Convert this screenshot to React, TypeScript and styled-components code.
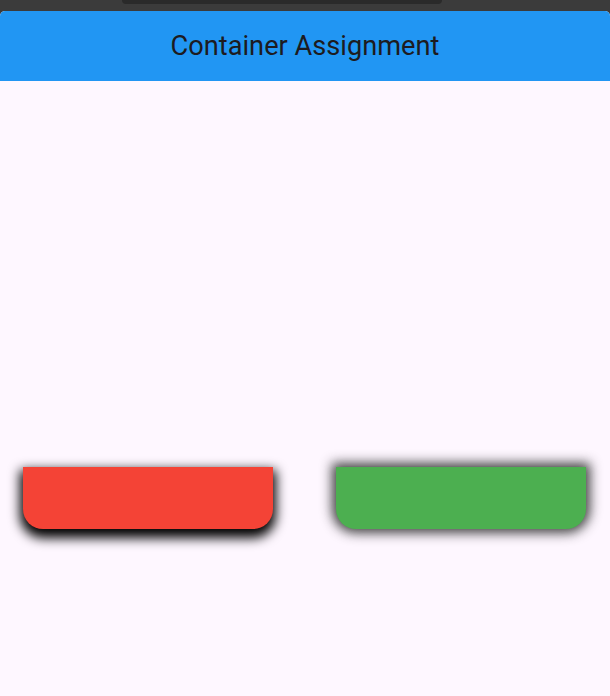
import styled, { createGlobalStyle } from 'styled-components';

const GlobalStyle = createGlobalStyle`
  html, body {
    margin: 0;
    padding: 0;
    background: #3b3b3b;
  }
  body {
    font-family: Roboto, "Noto Sans", sans-serif;
  }
`;

const Screen = styled.div`
  width: 610px;
  height: 696px;
  display: flex;
  flex-direction: column;
  background: #3b3b3b;
  overflow: hidden;
`;

const StatusBar = styled.div`
  height: 11px;
  flex-shrink: 0;
  padding-left: 122px;
`;

const Notch = styled.div`
  width: 320px;
  height: 4px;
  background: #2a2a2a;
  border-radius: 0 0 12px 12px;
`;

const Window = styled.div`
  flex: 1;
  display: flex;
  flex-direction: column;
  background: #fef7ff;
  border-radius: 5px 5px 0 0;
  overflow: hidden;
`;

const AppBar = styled.header`
  height: 70px;
  background: #2196f3;
  display: flex;
  align-items: center;
  justify-content: center;
`;

const Title = styled.h1`
  margin: 0;
  font-family: Roboto, sans-serif;
  font-size: 27.2px;
  font-weight: 400;
  color: #1d1b20;
  letter-spacing: 0;
`;

const Body = styled.main`
  flex: 1;
  display: flex;
  align-items: flex-start;
  padding: 386px 0 0 23px;
  gap: 63px;
`;

const Box = styled.div<{ $color: string; $shadow: string }>`
  width: 250px;
  height: 62px;
  background: ${(p) => p.$color};
  border-radius: 0 0 20px 20px;
  box-shadow: ${(p) => p.$shadow};
`;

export default function App() {
  return (
    <Screen>
      <GlobalStyle />
      <StatusBar>
        <Notch />
      </StatusBar>
      <Window>
        <AppBar>
          <Title>Container Assignment</Title>
        </AppBar>
        <Body>
          <Box $color="#f44336" $shadow="0 6px 12px 3px rgba(0, 0, 0, 1)" />
          <Box $color="#4caf50" $shadow="0 0 12px 4px rgba(45, 45, 45, 0.9)" />
        </Body>
      </Window>
    </Screen>
  );
}
